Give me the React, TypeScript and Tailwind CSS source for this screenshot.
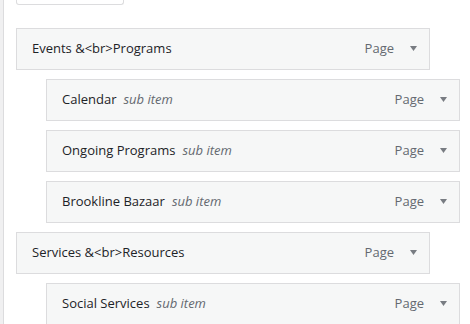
import React from "react";

interface MenuItem {
  title: string;
  sub?: boolean;
}

const items: MenuItem[] = [
  { title: "Events &<br>Programs" },
  { title: "Calendar", sub: true },
  { title: "Ongoing Programs", sub: true },
  { title: "Brookline Bazaar", sub: true },
  { title: "Services &<br>Resources" },
  { title: "Social Services", sub: true },
];

const Arrow = () => (
  <svg width="7" height="5" viewBox="0 0 7 5" className="ml-[16px] shrink-0 -translate-y-[1px]">
    <path d="M0 0 H7 L3.5 5 Z" fill="#787c82" />
  </svg>
);

const App: React.FC = () => {
  return (
    <div className="flex h-[324px] overflow-hidden bg-white font-['Open_Sans',sans-serif] text-[13px]">
      <div className="w-[4px] shrink-0 border-r border-[#dcdcde] bg-[#f0f0f1]" />
      <div className="flex-1 pl-[12px]">
        {/* bottom of previous box */}
        <div className="h-[5px] w-[108px] rounded-b-[3px] border border-t-0 border-[#dcdcde] bg-white" />

        <ul className="mt-[23px] space-y-[9px]">
          {items.map((item, i) => (
            <li key={i} className={item.sub ? "ml-[30px]" : ""}>
              <div className="flex h-[42px] w-[414px] items-center border border-[#dcdcde] bg-[#f6f7f7] pl-[15px] pr-[12px]">
                <span className="font-medium text-[#1d2327]">{item.title}</span>
                {item.sub && (
                  <span className="ml-[7px] italic text-[#646970]">sub item</span>
                )}
                <span className="ml-auto text-[#646970]">Page</span>
                <Arrow />
              </div>
            </li>
          ))}
        </ul>
      </div>
    </div>
  );
};

export default App;
